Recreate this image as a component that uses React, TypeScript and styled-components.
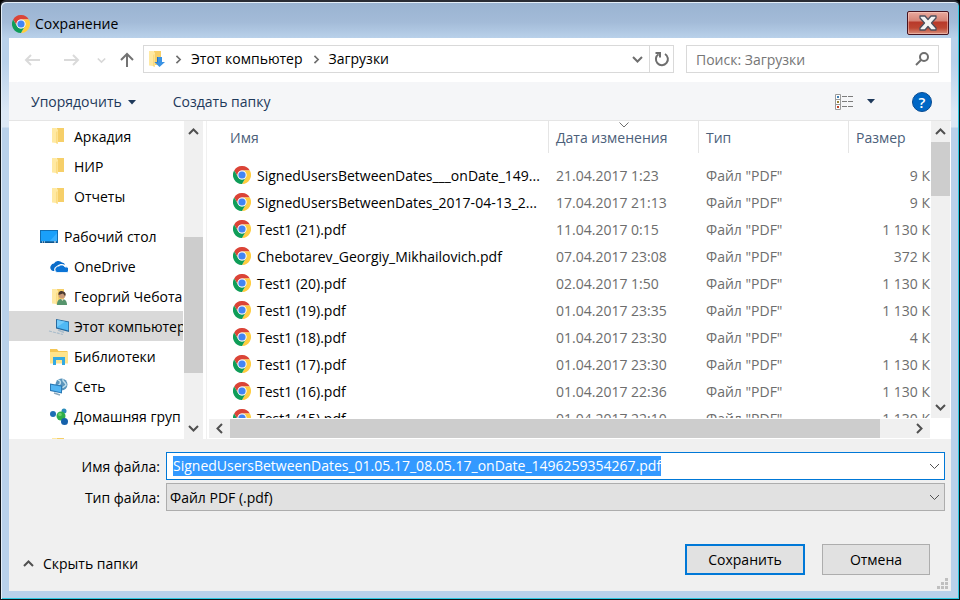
import React, { useEffect, useRef } from 'react';
import styled, { createGlobalStyle, css } from 'styled-components';

const Global = createGlobalStyle`
  *, *::before, *::after { box-sizing: border-box; }
  body { margin: 0; overflow: hidden; background: #000; }
  body, button, input, select, table {
    font-family: "Open Sans", "Noto Sans", sans-serif;
    font-size: 14px;
    line-height: 20px;
    color: #000;
  }
  button { border: 0; padding: 0; margin: 0; background: none; }
  svg { display: block; flex: none; }
`;

/* ---------- window frame ---------- */

const Frame = styled.div`
  height: 100vh;
  display: flex;
  flex-direction: column;
  padding: 0 8px 8px;
  border: 1px solid #101418;
  border-top: 2px solid #2a2c34;
  border-radius: 6px 6px 0 0;
  background: linear-gradient(#9ab3d1 0, #a3bbd8 20px, #b9d1ea 36px, #b9d1ea 60px, #dce8f5 110px, #dce8f5 125px, #b9d1ea 126px);
  box-shadow: inset 1px 1px 0 #e4eef8, inset -1px -1px 0 #2bc8e0;
`;

const TitleBar = styled.header`
  height: 36px;
  flex: none;
  display: flex;
  align-items: flex-start;
  justify-content: space-between;
  padding: 9px 2px 0 3px;
`;

const Title = styled.h1`
  display: flex;
  align-items: center;
  gap: 5px;
  margin: 3px 0 0;
  font-size: 14px;
  font-weight: 400;
`;

const CloseButton = styled.button`
  width: 42px;
  height: 24px;
  display: flex;
  align-items: center;
  justify-content: center;
  border: 1px solid #471420;
  border-radius: 2px;
  background: linear-gradient(#e9a99d 0, #d58376 9px, #b8392a 10px, #bd4632 16px, #d98f7c 22px);
  box-shadow: inset 0 0 0 1px rgba(255, 220, 210, 0.45);
`;

const Content = styled.main`
  flex: 1;
  min-height: 0;
  display: flex;
  flex-direction: column;
  background: #fff;
`;

/* ---------- navigation ---------- */

const NavRow = styled.nav`
  height: 44px;
  flex: none;
  display: flex;
  align-items: center;
  gap: 9px;
  padding: 0 12px 2px 15px;
`;

const NavButtons = styled.div`
  display: grid;
  grid-template-columns: 39px 34px 23px 14px;
  align-items: center;
  padding-top: 2px;
`;

const AddressBar = styled.div`
  flex: 1;
  height: 28px;
  display: flex;
  align-items: center;
  border: 1px solid #d9d9d9;
`;

const Crumbs = styled.div`
  flex: 1;
  display: flex;
  align-items: center;
  gap: 8px;
  padding-left: 4px;
`;

const Crumb = styled.button`
  padding-right: 1px;
`;

const AddressTool = styled.button<{ $divided?: boolean }>`
  width: 24px;
  height: 26px;
  display: flex;
  align-items: center;
  justify-content: center;
  ${p => p.$divided && css`border-left: 1px solid #d9d9d9;`}
`;

const SearchBox = styled.label`
  width: 253px;
  height: 28px;
  display: flex;
  align-items: center;
  margin-left: 3px;
  padding: 0 9px;
  border: 1px solid #d9d9d9;
`;

const SearchInput = styled.input`
  flex: 1;
  min-width: 0;
  border: 0;
  padding: 2px 0 0;
  outline: 0;
  background: transparent;
  &::placeholder { color: #767676; opacity: 1; }
`;

/* ---------- toolbar ---------- */

const Toolbar = styled.div`
  height: 39px;
  flex: none;
  display: flex;
  align-items: center;
  padding: 1px 19px 0 22px;
  background: #f5f6f8;
  border-bottom: 1px solid #e5e5e5;
`;

const ToolButton = styled.button`
  display: flex;
  align-items: center;
  gap: 6px;
  margin-right: 37px;
  padding-top: 1px;
  color: #1e395b;
`;

const ViewButton = styled.button`
  display: flex;
  align-items: center;
  gap: 13px;
  margin: 0 37px 0 auto;
`;

/* ---------- panes ---------- */

const Panes = styled.div`
  flex: 1;
  min-height: 0;
  display: flex;
`;

const Sidebar = styled.aside`
  width: 198px;
  flex: none;
  display: flex;
  padding-right: 3px;
  overflow: hidden;
  border-right: 1px solid #f0f0f0;
`;

const Tree = styled.ul`
  flex: 1;
  min-width: 0;
  margin: 0;
  padding: 0;
  list-style: none;
  overflow: hidden;
`;

const TreeItem = styled.li<{ $level: number; $selected?: boolean; $spaced?: boolean }>`
  height: 30px;
  display: flex;
  align-items: center;
  gap: 6px;
  margin-right: 1px;
  margin-top: ${p => (p.$spaced ? 10 : 0)}px;
  padding-top: 2px;
  padding-left: ${p => 21 + p.$level * 10}px;
  white-space: nowrap;
  overflow: hidden;
  background: ${p => (p.$selected ? '#d9d9d9' : 'transparent')};
`;

const Files = styled.section`
  flex: 1;
  min-width: 0;
  display: flex;
  flex-direction: column;
  padding-left: 2px;
`;

const FilesView = styled.div`
  flex: 1;
  min-height: 0;
  display: flex;
  padding-right: 1px;
  overflow: hidden;
`;

const TableClip = styled.div`
  flex: 1;
  min-width: 0;
  overflow: hidden;
`;

const Table = styled.table`
  width: 100%;
  table-layout: fixed;
  border-collapse: separate;
  border-spacing: 0;
`;

const HeadCell = styled.th<{ $width?: number; $first?: boolean }>`
  ${p => p.$width && css`width: ${p.$width}px;`}
  height: 32px;
  position: relative;
  padding: 2px 0 0 ${p => (p.$first ? 21 : 7)}px;
  border-right: 1px solid #e5e5e5;
  text-align: left;
  font-weight: 400;
  color: #4c607a;
  &:last-child { border-right: 0; }
`;

const SortMark = styled.svg`
  position: absolute;
  top: 1px;
  left: calc(50% - 5px);
`;

const Gap = styled.td`
  height: 9px;
  padding: 0;
`;

const Cell = styled.td<{ $right?: boolean }>`
  height: 27px;
  padding: 0 ${p => (p.$right ? 1 : 0)}px 0 7px;
  text-align: ${p => (p.$right ? 'right' : 'left')};
  white-space: nowrap;
  color: #6d6d6d;
`;

const NameCell = styled(Cell)`
  padding-left: 24px;
  color: #000;
`;

const FileName = styled.span`
  display: flex;
  align-items: flex-start;
  gap: 6px;
`;

/* ---------- scroll bars ---------- */

const Bar = styled.div<{ $horizontal?: boolean }>`
  flex: none;
  display: flex;
  flex-direction: ${p => (p.$horizontal ? 'row' : 'column')};
  ${p => (p.$horizontal ? 'height: 19px; flex: 1;' : 'width: 19px;')}
  background: #f0f0f0;
`;

const BarButton = styled.button`
  flex: 0 0 21px;
  display: flex;
  align-items: center;
  justify-content: center;
`;

const Track = styled.div<{ $share: number; $thumb?: boolean }>`
  flex: ${p => p.$share} 1 0;
  background: ${p => (p.$thumb ? '#cdcdcd' : 'transparent')};
`;

const BarRow = styled.div`
  flex: none;
  display: flex;
  padding: 1px 21px 1px 0;
`;

/* ---------- footer ---------- */

const Footer = styled.footer`
  flex: none;
  display: flex;
  flex-direction: column;
  padding: 13px 2px 2px 13px;
  background: #f0f0f0;
`;

const Fields = styled.div`
  display: grid;
  grid-template-columns: 138px 1fr;
  gap: 3px 6px;
  padding-right: 4px;
  align-items: center;
`;

const FieldLabel = styled.label`
  padding-top: 2px;
  text-align: right;
`;

const Combo = styled.div<{ $active?: boolean }>`
  height: 28px;
  position: relative;
  display: flex;
  align-items: center;
  border: 1px solid ${p => (p.$active ? '#0078d7' : '#adadad')};
  background: ${p => (p.$active ? '#fff' : '#e1e1e1')};
`;

const NameInput = styled.input`
  flex: 1;
  min-width: 0;
  height: 20px;
  padding: 0 6px;
  border: 0;
  outline: 0;
  background: transparent;
  &::selection { background: #3399ff; color: #fff; }
`;

const ComboButton = styled.button`
  width: 20px;
  height: 26px;
  display: flex;
  align-items: center;
  justify-content: center;
`;

const TypeSelect = styled.select`
  flex: 1;
  height: 26px;
  padding: 1px 24px 0 3px;
  border: 0;
  outline: 0;
  appearance: none;
  background: transparent;
`;

const SelectMark = styled.span`
  position: absolute;
  right: 4px;
  top: 8px;
  pointer-events: none;
`;

const Actions = styled.div`
  display: flex;
  align-items: center;
  gap: 17px;
  margin-top: 33px;
  padding-right: 19px;
`;

const HideButton = styled.button`
  display: flex;
  align-items: center;
  gap: 9px;
  margin: 8px auto 0 1px;
`;

const DialogButton = styled.button<{ $primary?: boolean }>`
  width: ${p => (p.$primary ? 120 : 108)}px;
  height: 31px;
  border: ${p => (p.$primary ? '2px solid #0078d7' : '1px solid #adadad')};
  background: #e1e1e1;
`;

const GripRow = styled.div`
  display: flex;
  justify-content: flex-end;
  padding: 3px 1px 0 0;
`;

/* ---------- icons ---------- */

const sector = 'M3.2 12A24 24 0 0 1 44.8 12L24 12A12 12 0 0 0 13.6 30Z';

const ChromeIcon = () => (
  <svg width="18" height="18" viewBox="0 0 48 48" aria-hidden="true">
    <circle cx="24" cy="24" r="23" fill="#fff" />
    <path d={sector} fill="#db4437" />
    <path d={sector} fill="#ffcd40" transform="rotate(120 24 24)" />
    <path d={sector} fill="#0f9d58" transform="rotate(240 24 24)" />
    <circle cx="24" cy="24" r="12" fill="#f1f1f1" />
    <circle cx="24" cy="24" r="9.5" fill="#4285f4" />
  </svg>
);

const chevrons = {
  up: 'M1 8L5.500 3.500L10 8',
  down: 'M1 3L5.500 7.500L10 3',
  left: 'M8 1L3.500 5.500L8 10',
  right: 'M3 1L7.500 5.500L3 10',
};

const Chevron = ({ dir, color = '#505050', weight = 2, size = 11 }: {
  dir: keyof typeof chevrons; color?: string; weight?: number; size?: number;
}) => (
  <svg width={size} height={size} viewBox="0 0 11 11" fill="none" stroke={color} strokeWidth={weight} aria-hidden="true">
    <path d={chevrons[dir]} />
  </svg>
);

const Caret = () => (
  <svg width="8" height="5" viewBox="0 0 8 5" aria-hidden="true"><path d="M0 0H8L4 4.500Z" fill="#1e395b" /></svg>
);

const ArrowLeft = () => (
  <svg width="17" height="12" viewBox="0 0 17 12" fill="none" stroke="#dadada" strokeWidth="2" aria-hidden="true">
    <path d="M2 6H16M7 1L2 6L7 11" />
  </svg>
);

const ArrowRight = () => (
  <svg width="17" height="12" viewBox="0 0 17 12" fill="none" stroke="#dadada" strokeWidth="2" aria-hidden="true">
    <path d="M1 6H15M10 1L15 6L10 11" />
  </svg>
);

const ArrowUp = () => (
  <svg width="14" height="16" viewBox="0 0 14 16" fill="none" stroke="#737373" strokeWidth="2" aria-hidden="true">
    <path d="M7 2V15M1 8L7 2L13 8" />
  </svg>
);

const FolderShape = () => (
  <>
    <path d="M5 1H12V15H5Z" fill="#f6cf69" />
    <path d="M0 1H4.500L6 3V17L4 16L0 15.500Z" fill="#ffe9a2" />
    <path d="M4 5L5.500 4V17L4 16Z" fill="#fbdc82" />
  </>
);

const FolderIcon = () => (
  <svg width="18" height="18" viewBox="-2 1 18 18" aria-hidden="true"><FolderShape /></svg>
);

const DownloadsIcon = () => (
  <svg width="18" height="18" viewBox="-1 0 18 18" aria-hidden="true">
    <FolderShape />
    <path d="M8 7H13V12H16L10.500 17L5.500 12H8Z" fill="#3a93e4" />
    <path d="M8 7H9V12.500H6.500L5.500 12H8Z" fill="#2472c0" />
  </svg>
);

const DesktopIcon = () => (
  <svg width="18" height="18" viewBox="0 0 18 18" aria-hidden="true">
    <rect x="0.5" y="2.5" width="17" height="12" fill="#1aa0fa" stroke="#126fb4" />
    <path d="M9 14L17 5V14Z" fill="#38b0ff" />
    <path d="M1 14H17" stroke="#0b3c66" />
    <path d="M2 14H3M4 14H5M14 14H16" stroke="#fff" />
  </svg>
);

const OneDriveIcon = () => (
  <svg width="18" height="18" viewBox="0 0 18 18" aria-hidden="true">
    <path d="M3 13A3.500 3.500 0 0 1 1 7.500A3.300 3.300 0 0 1 4 5.500A5 5 0 0 1 12 4.500A3 3 0 0 1 15 7A6 6 0 0 0 7 8A4 4 0 0 0 4.500 13Z" fill="#0a6cc9" />
    <path d="M7 14.500A3 3 0 0 1 6.500 9A3 3 0 0 1 9 8A3.800 3.800 0 0 1 15 9A2.800 2.800 0 0 1 17 14.500Z" fill="#0b74d6" stroke="#fff" strokeWidth="0.8" />
  </svg>
);

const UserIcon = () => (
  <svg width="18" height="18" viewBox="-2 0 18 18" aria-hidden="true">
    <FolderShape />
    <path d="M5 17C5 12 7 11 10 11C13 11 15 13 15 17Z" fill="#57956d" />
    <circle cx="10" cy="7" r="3.5" fill="#c99a78" />
    <path d="M6.500 7C6 3 9 2.500 11 3.500C14 4 14 7 13 8L11 5.500Z" fill="#4b3a32" />
    <path d="M9 11L10.500 13L12 11Z" fill="#e8d7c4" />
  </svg>
);

const ComputerIcon = () => (
  <svg width="18" height="18" viewBox="0 0 18 18" overflow="visible" aria-hidden="true">
    <path d="M6 1L19 3.500V14L6 10.500Z" fill="#27699e" />
    <path d="M7 2L18.300 4.300V12.500L7 9.600Z" fill="#50b9f5" />
    <path d="M7 2L15 3.700L7 9Z" fill="#74cbfa" />
    <path d="M-1 13L5 14.500L13 16.500" fill="none" stroke="#a9bccb" strokeWidth="1.2" strokeDasharray="3 1" />
    <path d="M8 12L14 14.500" stroke="#a9bccb" strokeWidth="1.5" />
  </svg>
);

const LibraryIcon = () => (
  <svg width="18" height="18" viewBox="0 0 18 18" aria-hidden="true">
    <path d="M0 1H7L8.500 3H17.500V15H0Z" fill="#f5c653" />
    <path d="M0 4H18V15.500H0Z" fill="#ffe48c" />
    <path d="M3 17V9H15V17H12V12H6V17Z" fill="#34a9e2" />
  </svg>
);

const NetworkIcon = () => (
  <svg width="18" height="18" viewBox="0 0 18 18" aria-hidden="true">
    <circle cx="11.5" cy="6.5" r="6" fill="#5a94bb" />
    <path d="M8 2C10 2 11 4 10 6L7 8M13 1C12 4 16 4 16 7C15 9 13 8 13 10" fill="none" stroke="#c2dfec" strokeWidth="1.5" />
    <path d="M0 5.500L12 7.500V15.500L0 13Z" fill="#2a79b5" />
    <path d="M1 6.700L11 8.400V14.200L1 12Z" fill="#52b5f3" />
    <path d="M4 15L10 17" stroke="#8ba8bd" strokeWidth="1.5" />
  </svg>
);

const HomeGroupIcon = () => (
  <svg width="18" height="18" viewBox="0 0 18 18" aria-hidden="true">
    <circle cx="3" cy="6" r="3" fill="#1d6fb4" />
    <circle cx="14" cy="3" r="2.5" fill="#2b8cba" />
    <circle cx="11" cy="8" r="4.5" fill="#2fae4a" />
    <circle cx="14.5" cy="13.5" r="3.5" fill="#1561aa" />
    <circle cx="10" cy="6.5" r="1.8" fill="#6fd06a" />
  </svg>
);

const RefreshIcon = () => (
  <svg width="16" height="16" viewBox="0 0 16 16" fill="none" stroke="#6e6e6e" strokeWidth="2" aria-hidden="true">
    <path d="M11 3A6 6 0 1 1 4.500 3.200" />
    <path d="M1.500 2H6V6.500" />
  </svg>
);

const SearchIcon = () => (
  <svg width="14" height="14" viewBox="0 0 14 14" fill="none" stroke="#6e6e6e" strokeWidth="2" aria-hidden="true">
    <circle cx="9" cy="5" r="4" />
    <path d="M6 8L1 13" />
  </svg>
);

const ViewIcon = () => (
  <svg width="19" height="16" viewBox="0 0 19 16" aria-hidden="true">
    <path d="M0.500 0.500H5.500V15.500H0.500ZM0.500 5.500H5.500M0.500 10.500H5.500" fill="#fff" stroke="#9a9a9a" />
    <path d="M7 2.500H12M13 2.500H18M7 7.500H12M13 7.500H18M7 12.500H12M13 12.500H18" stroke="#7c7c7c" />
    <path d="M2 3H4" stroke="#3f80b5" strokeWidth="2" />
    <path d="M2 8H4" stroke="#998437" strokeWidth="2" />
    <path d="M2 13H4" stroke="#c24022" strokeWidth="2" />
  </svg>
);

const HelpButton = styled.button`
  width: 20px;
  height: 20px;
  border: 1px solid #084b92;
  border-radius: 50%;
  background: #0067c5;
  color: #fff;
  font-size: 15px;
  font-weight: 600;
  line-height: 18px;
`;

const CloseIcon = () => (
  <svg width="20" height="16" viewBox="0 0 20 16" aria-hidden="true">
    <path d="M2 1H7L10 4.500L13 1H18V3L13.500 8L18 13V15H13L10 11.500L7 15H2V13L6.500 8L2 3Z" fill="#f4f4f4" stroke="#4c4f5e" strokeWidth="1.3" strokeLinejoin="round" />
  </svg>
);

const Grip = () => (
  <svg width="11" height="11" viewBox="0 0 11 11" fill="#bfbfbf" aria-hidden="true">
    <path d="M8 0H11V3H8ZM4 4H7V7H4ZM8 4H11V7H8ZM0 8H3V11H0ZM4 8H7V11H4ZM8 8H11V11H8Z" />
  </svg>
);

/* ---------- data ---------- */

const places = [
  { label: 'Аркадия', icon: <FolderIcon />, level: 2 },
  { label: 'НИР', icon: <FolderIcon />, level: 2 },
  { label: 'Отчеты', icon: <FolderIcon />, level: 2 },
  { label: 'Рабочий стол', icon: <DesktopIcon />, level: 1, spaced: true },
  { label: 'OneDrive', icon: <OneDriveIcon />, level: 2 },
  { label: 'Георгий Чебота', icon: <UserIcon />, level: 2 },
  { label: 'Этот компьютер', icon: <ComputerIcon />, level: 2, selected: true },
  { label: 'Библиотеки', icon: <LibraryIcon />, level: 2 },
  { label: 'Сеть', icon: <NetworkIcon />, level: 2 },
  { label: 'Домашняя груп', icon: <HomeGroupIcon />, level: 2 },
  { label: '', icon: <FolderIcon />, level: 2 },
];

const files = [
  ['SignedUsersBetweenDates___onDate_149...', '21.04.2017 1:23', '9 К'],
  ['SignedUsersBetweenDates_2017-04-13_2...', '17.04.2017 21:13', '9 К'],
  ['Test1 (21).pdf', '11.04.2017 0:15', '1 130 К'],
  ['Chebotarev_Georgiy_Mikhailovich.pdf', '07.04.2017 23:08', '372 К'],
  ['Test1 (20).pdf', '02.04.2017 1:50', '1 130 К'],
  ['Test1 (19).pdf', '01.04.2017 23:35', '1 130 К'],
  ['Test1 (18).pdf', '01.04.2017 23:30', '4 К'],
  ['Test1 (17).pdf', '01.04.2017 23:30', '1 130 К'],
  ['Test1 (16).pdf', '01.04.2017 22:36', '1 130 К'],
  ['Test1 (15).pdf', '01.04.2017 22:10', '1 130 К'],
];

export default function App() {
  const nameRef = useRef<HTMLInputElement>(null);

  useEffect(() => {
    nameRef.current?.focus();
    nameRef.current?.select();
  }, []);

  return (
    <>
      <Global />
      <Frame>
        <TitleBar>
          <Title><ChromeIcon />Сохранение</Title>
          <CloseButton aria-label="Закрыть"><CloseIcon /></CloseButton>
        </TitleBar>

        <Content>
          <NavRow>
            <NavButtons>
              <button aria-label="Назад"><ArrowLeft /></button>
              <button aria-label="Вперед"><ArrowRight /></button>
              <button aria-label="Последние"><Chevron dir="down" color="#d8d8d8" size={9} /></button>
              <button aria-label="Вверх"><ArrowUp /></button>
            </NavButtons>
            <AddressBar>
              <Crumbs>
                <DownloadsIcon />
                <Chevron dir="right" color="#6e6e6e" size={9} />
                <Crumb>Этот компьютер</Crumb>
                <Chevron dir="right" color="#6e6e6e" size={9} />
                <Crumb>Загрузки</Crumb>
              </Crumbs>
              <AddressTool aria-label="Журнал"><Chevron dir="down" color="#6e6e6e" /></AddressTool>
              <AddressTool $divided aria-label="Обновить"><RefreshIcon /></AddressTool>
            </AddressBar>
            <SearchBox>
              <SearchInput aria-label="Поиск" placeholder="Поиск: Загрузки" />
              <SearchIcon />
            </SearchBox>
          </NavRow>

          <Toolbar>
            <ToolButton>Упорядочить<Caret /></ToolButton>
            <ToolButton>Создать папку</ToolButton>
            <ViewButton aria-label="Вид"><ViewIcon /><Caret /></ViewButton>
            <HelpButton aria-label="Справка">?</HelpButton>
          </Toolbar>

          <Panes>
            <Sidebar>
              <Tree>
                {places.map((p, i) => (
                  <TreeItem key={i} $level={p.level} $selected={p.selected} $spaced={p.spaced}>
                    {p.icon}{p.label}
                  </TreeItem>
                ))}
              </Tree>
              <Bar>
                <BarButton aria-label="Вверх"><Chevron dir="up" /></BarButton>
                <Track $share={95} />
                <Track $share={136} $thumb />
                <Track $share={45} />
                <BarButton aria-label="Вниз"><Chevron dir="down" /></BarButton>
              </Bar>
            </Sidebar>

            <Files>
              <FilesView>
                <TableClip>
                  <Table>
                    <thead>
                      <tr>
                        <HeadCell $first>Имя</HeadCell>
                        <HeadCell $width={150}>
                          <SortMark width="10" height="6" viewBox="0 0 10 6" fill="none" stroke="#6e6e6e"><path d="M0.500 0.500L5 5L9.500 0.500" /></SortMark>
                          Дата изменения
                        </HeadCell>
                        <HeadCell $width={150}>Тип</HeadCell>
                        <HeadCell $width={82}>Размер</HeadCell>
                      </tr>
                    </thead>
                    <tbody>
                      <tr><Gap colSpan={4} /></tr>
                      {files.map(([name, date, size]) => (
                        <tr key={name}>
                          <NameCell><FileName><ChromeIcon />{name}</FileName></NameCell>
                          <Cell>{date}</Cell>
                          <Cell>Файл "PDF"</Cell>
                          <Cell $right>{size}</Cell>
                        </tr>
                      ))}
                    </tbody>
                  </Table>
                </TableClip>
                <Bar>
                  <BarButton aria-label="Вверх"><Chevron dir="up" /></BarButton>
                  <Track $share={54} $thumb />
                  <Track $share={201} />
                  <BarButton aria-label="Вниз"><Chevron dir="down" /></BarButton>
                </Bar>
              </FilesView>
              <BarRow>
                <Bar $horizontal>
                  <BarButton aria-label="Влево"><Chevron dir="left" /></BarButton>
                  <Track $share={650} $thumb />
                  <Track $share={29} />
                  <BarButton aria-label="Вправо"><Chevron dir="right" /></BarButton>
                </Bar>
              </BarRow>
            </Files>
          </Panes>

          <Footer>
            <Fields>
              <FieldLabel htmlFor="file-name">Имя файла:</FieldLabel>
              <Combo $active>
                <NameInput id="file-name" ref={nameRef} spellCheck={false} defaultValue="SignedUsersBetweenDates_01.05.17_08.05.17_onDate_1496259354267.pdf" />
                <ComboButton aria-label="Показать список"><Chevron dir="down" weight={1} /></ComboButton>
              </Combo>
              <FieldLabel htmlFor="file-type">Тип файла:</FieldLabel>
              <Combo>
                <TypeSelect id="file-type"><option>Файл PDF (.pdf)</option></TypeSelect>
                <SelectMark><Chevron dir="down" weight={1} /></SelectMark>
              </Combo>
            </Fields>
            <Actions>
              <HideButton><Chevron dir="up" />Скрыть папки</HideButton>
              <DialogButton $primary>Сохранить</DialogButton>
              <DialogButton>Отмена</DialogButton>
            </Actions>
            <GripRow><Grip /></GripRow>
          </Footer>
        </Content>
      </Frame>
    </>
  );
}
